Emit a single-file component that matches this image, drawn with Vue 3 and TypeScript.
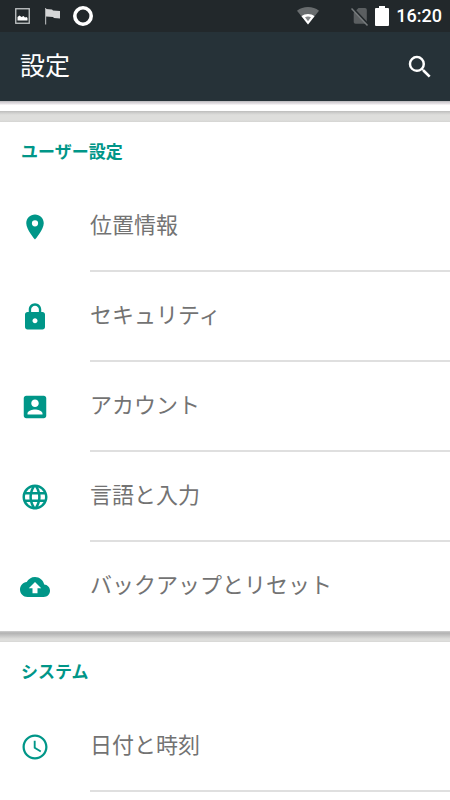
<script setup lang="ts">
interface Item {
  label: string
  icon: string
}
interface Section {
  title: string
  items: Item[]
}

const sections: Section[] = [
  {
    title: 'ユーザー設定',
    items: [
      {
        label: '位置情報',
        icon: 'M12 2C8.13 2 5 5.13 5 9c0 5.25 7 13 7 13s7-7.75 7-13c0-3.87-3.13-7-7-7zm0 9.5a2.5 2.5 0 0 1 0-5 2.5 2.5 0 0 1 0 5z',
      },
      {
        label: 'セキュリティ',
        icon: 'M18 8h-1V6c0-2.76-2.24-5-5-5S7 3.24 7 6v2H6c-1.1 0-2 .9-2 2v10c0 1.1.9 2 2 2h12c1.1 0 2-.9 2-2V10c0-1.1-.9-2-2-2zm-6 9c-1.1 0-2-.9-2-2s.9-2 2-2 2 .9 2 2-.9 2-2 2zm3.1-9H8.9V6c0-1.71 1.39-3.1 3.1-3.1 1.71 0 3.1 1.39 3.1 3.1v2z',
      },
      {
        label: 'アカウント',
        icon: 'M3 5v14c0 1.1.89 2 2 2h14c1.1 0 2-.9 2-2V5c0-1.1-.9-2-2-2H5c-1.11 0-2 .9-2 2zm12 4c0 1.66-1.34 3-3 3s-3-1.34-3-3 1.34-3 3-3 3 1.34 3 3zm-9 8c0-2 4-3.1 6-3.1s6 1.1 6 3.1v1H6v-1z',
      },
      {
        label: '言語と入力',
        icon: 'M11.99 2C6.47 2 2 6.48 2 12s4.47 10 9.99 10C17.52 22 22 17.52 22 12S17.52 2 11.99 2zm6.93 6h-2.95a15.65 15.65 0 0 0-1.38-3.56A8.03 8.03 0 0 1 18.92 8zM12 4.04c.83 1.2 1.48 2.53 1.91 3.96h-3.82c.43-1.43 1.08-2.76 1.91-3.96zM4.26 14C4.1 13.36 4 12.69 4 12s.1-1.36.26-2h3.38c-.08.66-.14 1.32-.14 2s.06 1.34.14 2H4.26zm.82 2h2.95c.32 1.25.78 2.45 1.38 3.56A7.987 7.987 0 0 1 5.08 16zm2.95-8H5.08a7.987 7.987 0 0 1 4.33-3.56A15.65 15.65 0 0 0 8.03 8zM12 19.96c-.83-1.2-1.48-2.53-1.91-3.96h3.82c-.43 1.43-1.08 2.76-1.91 3.96zM14.34 14H9.66c-.09-.66-.16-1.32-.16-2s.07-1.35.16-2h4.68c.09.65.16 1.32.16 2s-.07 1.34-.16 2zm.25 5.56c.6-1.11 1.06-2.31 1.38-3.56h2.95a8.03 8.03 0 0 1-4.33 3.56zM16.36 14c.08-.66.14-1.32.14-2s-.06-1.34-.14-2h3.38c.16.64.26 1.31.26 2s-.1 1.36-.26 2h-3.38z',
      },
      {
        label: 'バックアップとリセット',
        icon: 'M19.35 10.04C18.67 6.59 15.64 4 12 4 9.11 4 6.6 5.64 5.35 8.04 2.34 8.36 0 10.91 0 14c0 3.31 2.69 6 6 6h13c2.76 0 5-2.24 5-5 0-2.64-2.05-4.78-4.65-4.96zM14 13v4h-4v-4H7l5-5 5 5h-3z',
      },
    ],
  },
  {
    title: 'システム',
    items: [
      {
        label: '日付と時刻',
        icon: 'M11.99 2C6.47 2 2 6.48 2 12s4.47 10 9.99 10C17.52 22 22 17.52 22 12S17.52 2 11.99 2zM12 20.2c-4.53 0-8.2-3.67-8.2-8.2s3.67-8.2 8.2-8.2 8.2 3.67 8.2 8.2-3.67 8.2-8.2 8.2zM12.5 7H11v6l5.25 3.15.75-1.23-4.5-2.67z',
      },
    ],
  },
]
</script>

<template>
  <div class="screen">
    <div class="status">
      <svg class="pic" viewBox="0 0 15 16" aria-hidden="true">
        <rect x="0.75" y="0.75" width="13.5" height="14.5" fill="none" stroke="#c4c7c8" stroke-width="1.3" />
        <path d="M2.5 12.5V9l2-1.5L6.5 9l2-1L10 9.5l1.5-.5 1 1v2.5z" fill="#fff" />
      </svg>
      <svg class="flag" viewBox="0 0 16 18" aria-hidden="true">
        <path d="M.6 1v16.5" stroke="#a9acad" stroke-width="1.2" />
        <path d="M1 2l6 .5 1 1 7 .5v7.5l-6-.5-1-1-7-.5z" fill="#d5d6d7" />
      </svg>
      <svg class="ring" viewBox="0 0 20 20" aria-hidden="true">
        <circle cx="10" cy="10" r="8.2" fill="none" stroke="#fff" stroke-width="3.6" />
      </svg>
      <span class="spacer"></span>
      <svg class="wifi" viewBox="0 0 22 18" aria-hidden="true">
        <path d="M0 3.8C6-1.2 16-1.2 22 3.8L11 17.5z" fill="#686c6e" />
        <path d="M4.5 9.2c3.5-3 9.500-3 13 0L11 17.5z" fill="#fff" />
        <path d="M8 10.3c2-1 4-1 6 0l-3 4z" fill="#85888a" />
      </svg>
      <svg class="sim" viewBox="0 0 18 19" aria-hidden="true">
        <path d="M7.500 1H14q1.8 0 1.8 1.8V15q0 1.8-1.8 1.8H4.5q-1.8 0-1.8-1.8V5.8z" fill="#5b5f61" />
        <path d="M1.500.8l16 17" stroke="#22282b" stroke-width="2" />
        <path d="M.5 1.5l16 17" stroke="#777b7d" stroke-width="1.5" />
      </svg>
      <svg class="battery" viewBox="0 0 14 20" aria-hidden="true">
        <path d="M4 0h6v2h3q1 0 1 1v16q0 1-1 1H1q-1 0-1-1V3q0-1 1-1h3z" fill="#fff" />
      </svg>
      <span class="time">16:20</span>
    </div>
    <header class="bar">
      <h1>設定</h1>
      <button type="button" class="search" aria-label="検索">
        <svg viewBox="0 0 24 24" fill="currentColor" aria-hidden="true">
          <path d="M15.5 14h-.79l-.28-.27A6.471 6.471 0 0 0 16 9.5 6.5 6.5 0 1 0 9.5 16c1.61 0 3.09-.59 4.23-1.57l.27.28v.79l5 4.99L20.49 19l-4.99-5zm-6 0C7.01 14 5 11.99 5 9.5S7.01 5 9.5 5 14 7.01 14 9.5 11.99 14 9.5 14z" />
        </svg>
      </button>
    </header>
    <main>
      <div class="tail"></div>
      <section v-for="section in sections" :key="section.title">
        <h2>{{ section.title }}</h2>
        <ul>
          <li v-for="item in section.items" :key="item.label">
            <a href="#">
              <svg class="icon" viewBox="0 0 24 24" fill="currentColor" aria-hidden="true">
                <path :d="item.icon" fill-rule="evenodd" />
              </svg>
              <span class="label">{{ item.label }}</span>
            </a>
          </li>
        </ul>
      </section>
    </main>
  </div>
</template>

<style>
body {
  margin: 0;
  background: #fff;
}
</style>

<style scoped>
.screen {
  min-height: 100vh;
  background: #fff;
  font-family: Roboto, "Noto Sans CJK JP", sans-serif;
}
.status {
  display: flex;
  align-items: center;
  height: 32px;
  box-sizing: border-box;
  padding: 0 8px 0 15px;
  background: #22282b;
  color: #fff;
}
.status svg {
  flex: none;
}
.pic {
  width: 15px;
  height: 16px;
}
.flag {
  width: 16px;
  height: 18px;
  margin-left: 15px;
}
.ring {
  width: 20px;
  height: 20px;
  margin-left: 12px;
}
.spacer {
  flex: 1;
}
.wifi {
  width: 22px;
  height: 18px;
  margin-right: 32px;
}
.sim {
  width: 18px;
  height: 19px;
  margin-right: 6px;
}
.battery {
  width: 14px;
  height: 20px;
  margin-right: 7px;
}
.time {
  font-size: 18px;
  line-height: 32px;
  font-weight: 500;
}
.bar {
  display: flex;
  align-items: center;
  justify-content: space-between;
  height: 69px;
  padding: 0 15px 0 20px;
  background: #263238;
  color: #fff;
}
h1 {
  margin: 0;
  font-size: 25px;
  line-height: 36px;
  font-weight: 400;
}
.search {
  width: 30px;
  height: 30px;
  padding: 0;
  border: 0;
  background: none;
  color: #fff;
}
.search svg,
.icon {
  display: block;
  width: 30px;
  height: 30px;
  flex: none;
}
.tail {
  height: 10px;
  background: linear-gradient(#b9b8bb, #dedade 2px, #e6e2e6 3px, #fff 4px);
}
section::before {
  content: "";
  display: block;
  height: 11px;
  background: linear-gradient(#d0d0d0, #b2b2b2 2px, #c8c8c7 5px, #dededc 8px, #dededc 10px, #d4d4d2);
}
section:first-of-type::before {
  background: linear-gradient(#bcbcbb, #cfcfce 2px, #dededc 4px, #dededc 9px, #d4d4d2);
}
h2 {
  margin: 0;
  padding: 0 21px;
  font-size: 17px;
  line-height: 60px;
  font-weight: 700;
  color: #009688;
}
ul {
  margin: 0;
  padding: 0;
  list-style: none;
}
a {
  display: flex;
  align-items: center;
  gap: 40px;
  padding-left: 20px;
  color: #009688;
  text-decoration: none;
}
.label {
  flex: 1;
  border-bottom: 2px solid #dfdfdf;
  font-size: 22px;
  line-height: 88px;
  color: #737373;
}
section:not(:last-child) li:last-child .label {
  border-bottom: 1px solid #fff;
}
</style>
